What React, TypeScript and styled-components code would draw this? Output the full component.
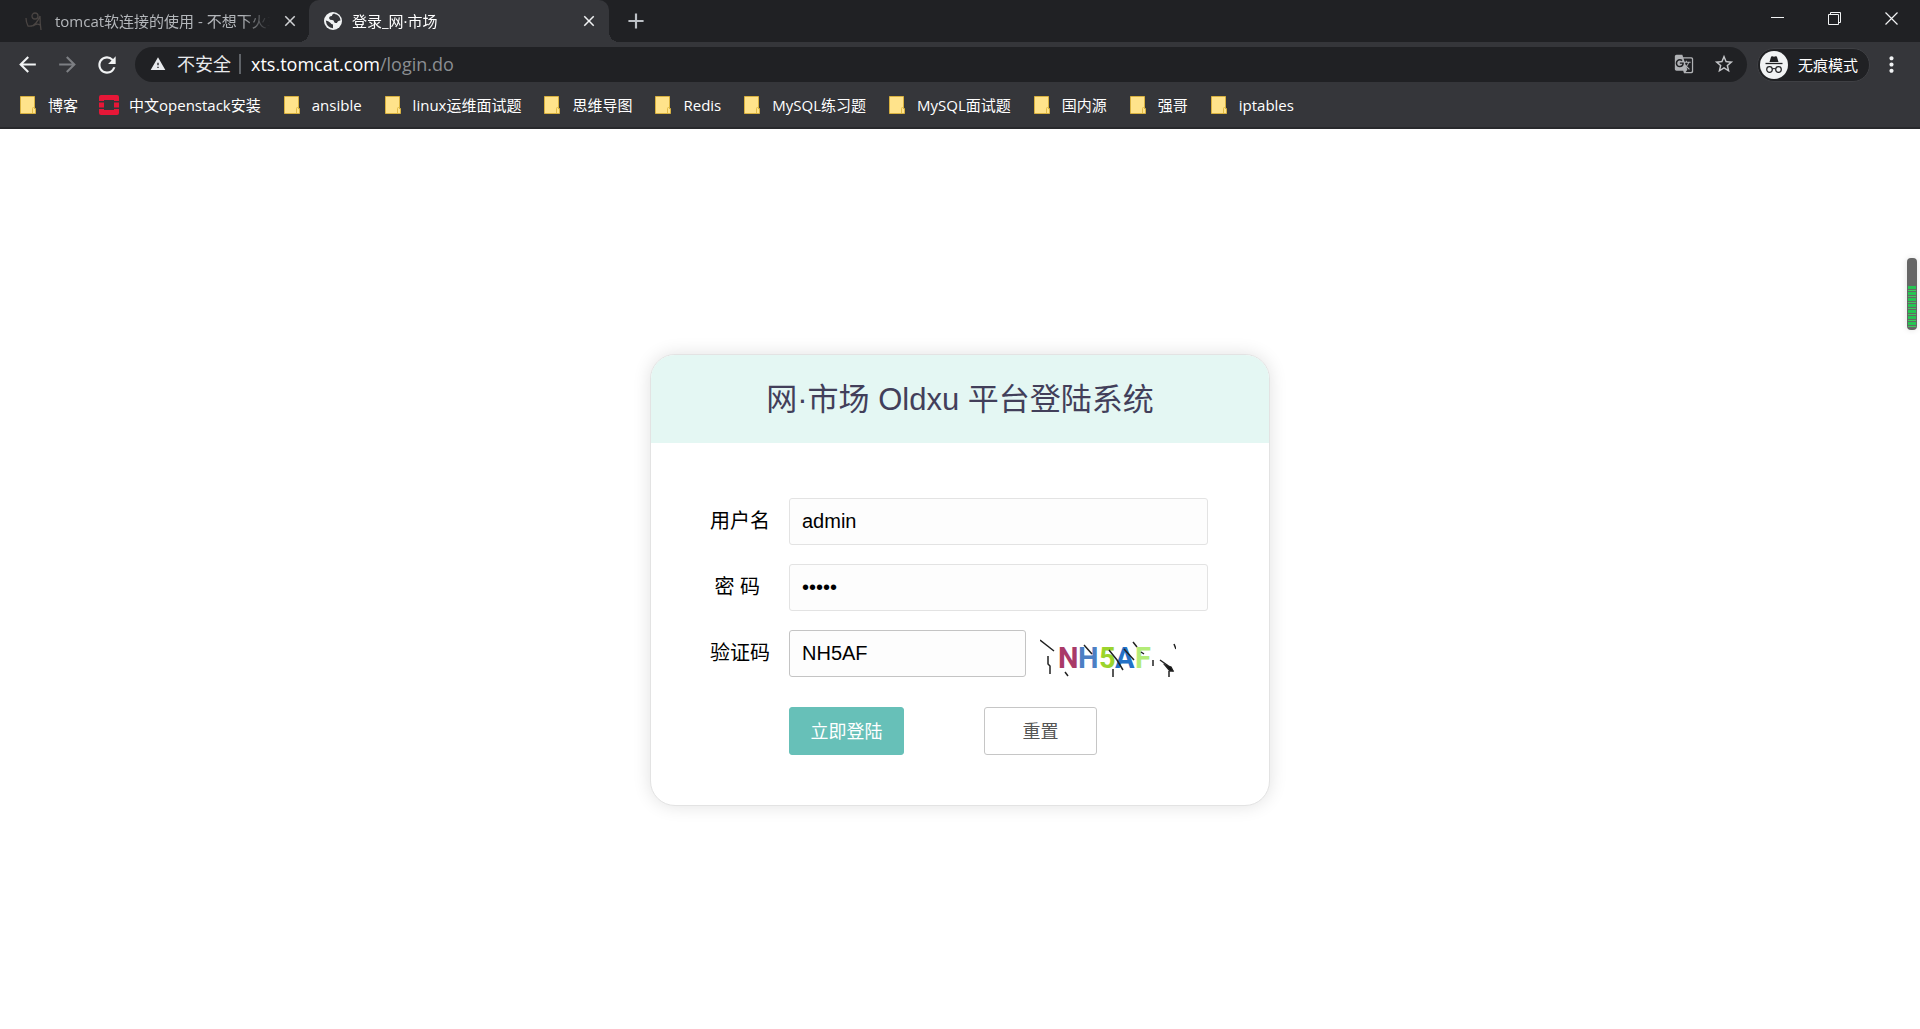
import React, { useState } from "react";
import styled, { createGlobalStyle } from "styled-components";
import {
  MdAdd,
  MdArrowBack,
  MdArrowForward,
  MdClose,
  MdGTranslate,
  MdMoreVert,
  MdRefresh,
  MdStarBorder,
  MdWarning,
} from "react-icons/md";

const uiFont = `"Open Sans", "Noto Sans CJK SC", sans-serif`;
const pageFont = `"Liberation Sans", "Noto Sans CJK SC", sans-serif`;

const GlobalStyle = createGlobalStyle`
  *, *::before, *::after { box-sizing: border-box; }
  body { margin: 0; background: #fff; font-family: ${uiFont}; }
  button, input { font: inherit; margin: 0; }
  svg { display: block; flex: none; }
`;

const Window = styled.div`
  display: flex;
  flex-direction: column;
  min-height: 100vh;
`;

const Chrome = styled.header`
  background: #35363a;
  border-bottom: 2px solid #28292c;
  color: #fff;
`;

const TabStrip = styled.div`
  display: flex;
  height: 42px;
  padding-left: 9px;
  background: #202124;
`;

const Tab = styled.div<{ $active?: boolean }>`
  position: relative;
  display: flex;
  align-items: center;
  width: 300px;
  padding: 0 10px 0 ${(p) => (p.$active ? 15 : 16)}px;
  gap: ${(p) => (p.$active ? 10 : 11)}px;
  font-size: 15px;
  border-radius: 10px 10px 0 0;
  background: ${(p) => (p.$active ? "#35363a" : "transparent")};
  color: ${(p) => (p.$active ? "#fff" : "#b4b7bb")};

  &::before,
  &::after {
    content: ${(p) => (p.$active ? '""' : "none")};
    position: absolute;
    bottom: 0;
    width: 10px;
    height: 10px;
  }
  &::before {
    right: 100%;
    background: radial-gradient(circle at 0 0, transparent 10px, #35363a 10px);
  }
  &::after {
    left: 100%;
    background: radial-gradient(circle at 100% 0, transparent 10px, #35363a 10px);
  }
`;

const TabTitle = styled.span`
  flex: 1;
  min-width: 0;
  overflow: hidden;
  white-space: nowrap;
  line-height: 24px;
  mask-image: linear-gradient(to right, #000 calc(100% - 28px), transparent);
`;

const IconButton = styled.button<{ $width: number; $color?: string }>`
  display: flex;
  align-items: center;
  justify-content: center;
  flex: none;
  width: ${(p) => p.$width}px;
  padding: 0;
  border: 0;
  background: none;
  color: ${(p) => p.$color ?? "#f1f3f4"};
`;

const WindowControls = styled.div`
  display: flex;
  height: 36px;
  margin-left: auto;
`;

const Toolbar = styled.div`
  display: flex;
  align-items: center;
  height: 45px;
  padding: 0 8px 0 7px;
`;

const NavButtons = styled.nav`
  display: flex;
  margin-right: 8px;
`;

const AddressBar = styled.div`
  display: flex;
  align-items: center;
  flex: 1;
  height: 35px;
  padding: 0 3px 2px 15px;
  border-radius: 18px;
  background: #202124;
  font-size: 18px;
  line-height: 32px;
`;

const Security = styled.span`
  display: flex;
  align-items: center;
  gap: 11px;
  color: #e8eaed;
`;

const Divider = styled.span`
  width: 2px;
  height: 20px;
  margin: 0 10px 0 8px;
  background: #5f6368;
`;

const Url = styled.span`
  flex: 1;
  white-space: nowrap;
`;

const UrlPath = styled.span`
  color: #8b8e92;
`;

const Incognito = styled.button`
  display: flex;
  align-items: center;
  gap: 10px;
  height: 34px;
  margin-left: 10px;
  padding: 0 11px 0 2px;
  border: 1px solid #3f4044;
  border-radius: 17px;
  background: #202124;
  color: #fff;
  font-size: 15px;
`;

const Bookmarks = styled.nav`
  display: flex;
  gap: 21px;
  height: 40px;
  padding: 0 18px 4px;
  align-items: center;
`;

const Bookmark = styled.a`
  display: flex;
  align-items: center;
  gap: 10px;
  color: #fff;
  font-size: 15px;
  line-height: 24px;
  text-decoration: none;
  white-space: nowrap;
`;

const Page = styled.main`
  display: flex;
  flex: 1;
  align-items: center;
  justify-content: center;
  padding-top: 1px;
  font-family: ${pageFont};
`;

const Card = styled.section`
  width: 620px;
  max-width: 100%;
  overflow: hidden;
  border: 1px solid #e3e3e3;
  border-radius: 25px;
  background: #fff;
  box-shadow: 0 0 18px rgba(0, 0, 0, 0.12);
`;

const CardTitle = styled.h1`
  margin: 0;
  padding: 21px 0 19px;
  background: #e4f7f3;
  color: #423f5a;
  font-size: 31px;
  font-weight: 400;
  line-height: 48px;
  text-align: center;
`;

const Form = styled.form`
  display: flex;
  flex-direction: column;
  gap: 19px;
  padding: 55px 61px 50px 49px;
`;

const Row = styled.div`
  display: grid;
  grid-template-columns: 80px 1fr;
  gap: 9px;
  align-items: center;
`;

const Label = styled.label`
  color: #000;
  font-size: 20px;
  line-height: 24px;
  text-align: center;
  white-space: pre;
`;

const Field = styled.input<{ $strong?: boolean }>`
  width: 100%;
  height: 47px;
  padding: 0 12px;
  border: 1px solid ${(p) => (p.$strong ? "#c4c4c4" : "#e3e3e3")};
  border-radius: 3px;
  outline: 0;
  background: #fdfdfd;
  color: #000;
  font-size: 20px;
`;

const CaptchaGroup = styled.div`
  display: grid;
  grid-template-columns: 237px 136px;
  gap: 14px;
  align-items: end;
`;

const Actions = styled.div`
  display: flex;
  gap: 80px;
  padding: 11px 0 0 89px;
`;

const ActionButton = styled.button<{ $primary?: boolean }>`
  width: ${(p) => (p.$primary ? 115 : 113)}px;
  height: 48px;
  padding: 0 0 2px;
  border: 1px solid ${(p) => (p.$primary ? "#67c0b8" : "#c6c6c6")};
  border-radius: 3px;
  background: ${(p) => (p.$primary ? "#67c0b8" : "#fff")};
  color: ${(p) => (p.$primary ? "#fff" : "#555")};
  font-size: 18px;
`;

const Meter = styled.div`
  position: absolute;
  top: 258px;
  right: 3px;
  width: 10px;
  height: 72px;
  padding: 28px 1px 3px;
  border-radius: 4px;
  background: #666;
  box-shadow: 0 0 6px rgba(0, 0, 0, 0.12);
`;

const MeterLevel = styled.div`
  height: 100%;
  background: repeating-linear-gradient(#25c552 0 3px, #666 3px 4px, #3ccb5c 4px 5px, #666 5px 6px);
`;

const FolderIcon = () => (
  <svg width="20" height="20" viewBox="0 0 20 20">
    <path d="M2.5 1.5h14v12h1v5h-15z" fill="#ffe38b" stroke="#d8b13f" />
    <path d="M14.5 18v-4.5q0-1 1-1h1" fill="none" stroke="#e3bc45" />
  </svg>
);

const OpenStackIcon = () => (
  <svg width="20" height="20" viewBox="0 0 20 20">
    <path
      d="M0 6V2q0-2 2-2h16q2 0 2 2v4h-5V5H5v1zM0 7.5h5v5H0zM15 7.5h5v5h-5zM0 14h5v1h10v-1h5v4q0 2-2 2H2q-2 0-2-2z"
      fill="#e61737"
    />
  </svg>
);

const SketchIcon = () => (
  <svg width="19" height="19" viewBox="0 0 19 19" fill="none" stroke="#4a4543" strokeWidth="1.3">
    <circle cx="10" cy="4" r="3" />
    <path d="M1 6q0 4 2 8 5 1 8-3t4-7q0 8 1 14M8 14q4-3 7-1" />
  </svg>
);

const GlobeIcon = () => (
  <svg width="18" height="18" viewBox="1 1 18 18">
    <circle cx="10" cy="10" r="9" fill="#f1f3f4" />
    <path
      d="M11 2.600q-2 1-2.200 2.400-3 0-2.600 2.500.3 1.500 3 1.500 1.800.2 1.800 1.500t1.500 1.500h1.500q.5-2.500 3.500-2.500Q17 5 13.500 3.500q-1 0-2.500-.9zM2.800 9.500q2.500.2 4.500 2.300 1 1.700 2.700 1.700v3.800Q3.500 16.500 2.800 9.500z"
      fill="#35363a"
    />
  </svg>
);

const IncognitoIcon = () => (
  <svg width="28" height="28" viewBox="0 0 28 28">
    <circle cx="14" cy="14" r="14" fill="#f1f3f4" />
    <path d="M9.500 11l1.500-5q.3-1 1.300-.7l1.700.5 1.700-.5q1-.3 1.300.7l1.500 5z" fill="#202124" />
    <path d="M5.500 12.500h17" stroke="#202124" strokeWidth="1.300" />
    <g fill="none" stroke="#202124" strokeWidth="1.200">
      <circle cx="9.500" cy="18.500" r="2.800" />
      <circle cx="18.500" cy="18.500" r="2.800" />
      <path d="M12.300 18q1.700-1 3.400 0" />
    </g>
  </svg>
);

const MinimizeIcon = () => (
  <svg width="13" height="13" viewBox="0 0 13 13">
    <path d="M0 5.500h13" stroke="currentColor" />
  </svg>
);

const RestoreIcon = () => (
  <svg width="13" height="13" viewBox="0 0 13 13" fill="none" stroke="currentColor">
    <path d="M.5 2.500h10v10H.5zM2.500 2.500v-2h10v10h-2" />
  </svg>
);

const CloseIcon = () => (
  <svg width="13" height="13" viewBox="0 0 13 13">
    <path d="M.5.5l12 12M12.500.5l-12 12" stroke="currentColor" strokeWidth="1.200" />
  </svg>
);

const captchaLetters = [
  { char: "N", x: 18, color: "#a93a68" },
  { char: "H", x: 38, color: "#4c7fc4" },
  { char: "5", x: 59, color: "#9bd42c" },
  { char: "A", x: 75, color: "#2371c6" },
  { char: "F", x: 95, color: "#b3ec77" },
];

const Captcha = () => (
  <svg width="136" height="38" viewBox="0 0 136 38" role="img" aria-label="验证码图片">
    <g fontFamily="Roboto, 'Liberation Sans', sans-serif" fontWeight="700" fontSize="29">
      {captchaLetters.map((letter) => (
        <text key={letter.char} x={letter.x} y="29" fill={letter.color}>
          {letter.char}
        </text>
      ))}
    </g>
    <g stroke="#222" strokeWidth="1.500" fill="none">
      <path d="M0 1l14 11M8 17v8l2 2v8M25 33l3 4M44 6l8 9M69 11l8 10 6 10M73 30v8M84 10l10 11M93 3l4 5M101 13l3 2M113 21v6M120 21l7 5 6 6M127 26l5 5M129 32v6M134 5l2 5" />
      <path d="M125 26l5 6h3l-2-4z" fill="#111" />
    </g>
  </svg>
);

const bookmarks = [
  "博客",
  "中文openstack安装",
  "ansible",
  "linux运维面试题",
  "思维导图",
  "Redis",
  "MySQL练习题",
  "MySQL面试题",
  "国内源",
  "强哥",
  "iptables",
];

export default function App() {
  const [username, setUsername] = useState("admin");
  const [password, setPassword] = useState("admin");
  const [code, setCode] = useState("NH5AF");

  const clear = () => {
    setUsername("");
    setPassword("");
    setCode("");
  };

  return (
    <Window>
      <GlobalStyle />
      <Chrome>
        <TabStrip>
          <Tab>
            <SketchIcon />
            <TabTitle>tomcat软连接的使用 - 不想下火车</TabTitle>
            <IconButton $width={18} $color="#d0d2d5" aria-label="关闭标签页">
              <MdClose size={18} />
            </IconButton>
          </Tab>
          <Tab $active>
            <GlobeIcon />
            <TabTitle>登录_网·市场</TabTitle>
            <IconButton $width={20} aria-label="关闭标签页">
              <MdClose size={18} />
            </IconButton>
          </Tab>
          <IconButton $width={54} $color="#bdc1c6" aria-label="新标签页">
            <MdAdd size={26} />
          </IconButton>
          <WindowControls>
            <IconButton $width={57} aria-label="最小化">
              <MinimizeIcon />
            </IconButton>
            <IconButton $width={57} aria-label="还原">
              <RestoreIcon />
            </IconButton>
            <IconButton $width={57} aria-label="关闭">
              <CloseIcon />
            </IconButton>
          </WindowControls>
        </TabStrip>
        <Toolbar>
          <NavButtons>
            <IconButton $width={40} aria-label="后退">
              <MdArrowBack size={25} />
            </IconButton>
            <IconButton $width={40} $color="#7d7f83" aria-label="前进">
              <MdArrowForward size={25} />
            </IconButton>
            <IconButton $width={40} aria-label="重新加载">
              <MdRefresh size={26} />
            </IconButton>
          </NavButtons>
          <AddressBar>
            <Security>
              <MdWarning size={16} />
              不安全
            </Security>
            <Divider />
            <Url>
              xts.tomcat.com<UrlPath>/login.do</UrlPath>
            </Url>
            <IconButton $width={40} $color="#b0b2b5" aria-label="翻译此页">
              <MdGTranslate size={20} />
            </IconButton>
            <IconButton $width={40} $color="#c4c6c9" aria-label="添加书签">
              <MdStarBorder size={22} />
            </IconButton>
          </AddressBar>
          <Incognito>
            <IncognitoIcon />
            无痕模式
          </Incognito>
          <IconButton $width={42} aria-label="菜单">
            <MdMoreVert size={25} />
          </IconButton>
        </Toolbar>
        <Bookmarks>
          {bookmarks.map((name) => (
            <Bookmark key={name} href="#">
              {name.includes("openstack") ? <OpenStackIcon /> : <FolderIcon />}
              {name}
            </Bookmark>
          ))}
        </Bookmarks>
      </Chrome>
      <Page>
        <Card>
          <CardTitle>网·市场 Oldxu 平台登陆系统</CardTitle>
          <Form onSubmit={(e) => e.preventDefault()}>
            <Row>
              <Label htmlFor="username">用户名</Label>
              <Field id="username" value={username} onChange={(e) => setUsername(e.target.value)} />
            </Row>
            <Row>
              <Label htmlFor="password">{"密 码 "}</Label>
              <Field
                id="password"
                type="password"
                value={password}
                onChange={(e) => setPassword(e.target.value)}
              />
            </Row>
            <Row>
              <Label htmlFor="code">验证码</Label>
              <CaptchaGroup>
                <Field id="code" $strong value={code} onChange={(e) => setCode(e.target.value)} />
                <Captcha />
              </CaptchaGroup>
            </Row>
            <Actions>
              <ActionButton $primary type="submit">
                立即登陆
              </ActionButton>
              <ActionButton type="button" onClick={clear}>
                重置
              </ActionButton>
            </Actions>
          </Form>
        </Card>
      </Page>
      <Meter>
        <MeterLevel />
      </Meter>
    </Window>
  );
}
